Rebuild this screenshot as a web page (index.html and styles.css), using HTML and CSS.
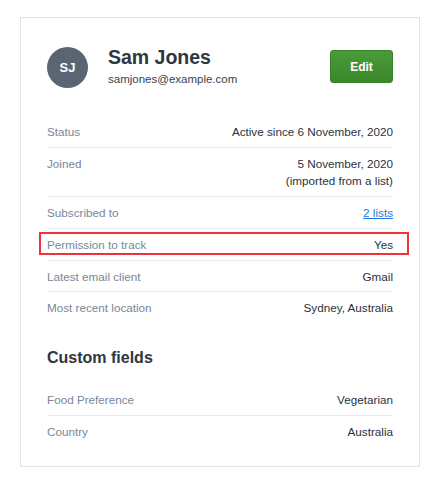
FILE: index.html
```html
<!DOCTYPE html>
<html lang="en">

<head>
    <title>Subscriber</title>
    <link rel="stylesheet" href="styles.css">
</head>

<body>
    <div class="card">
        <div class="profile">
            <div class="avatar">SJ</div>
            <div class="profile-info">
                <div class="profile-name">Sam Jones</div>
                <div class="profile-email">samjones@example.com</div>
            </div>
            <button class="edit-button">Edit</button>
        </div>

        <div class="details">
            <div class="row">
                <span class="label">Status</span>
                <span class="value">Active since 6 November, 2020</span>
            </div>
            <div class="row">
                <span class="label">Joined</span>
                <span class="value">5 November, 2020<br>(imported from a list)</span>
            </div>
            <div class="row">
                <span class="label">Subscribed to</span>
                <a class="value link" href="#">2 lists</a>
            </div>
            <div class="row highlighted">
                <span class="label">Permission to track</span>
                <span class="value">Yes</span>
            </div>
            <div class="row">
                <span class="label">Latest email client</span>
                <span class="value">Gmail</span>
            </div>
            <div class="row">
                <span class="label">Most recent location</span>
                <span class="value">Sydney, Australia</span>
            </div>
        </div>

        <h2 class="section-title">Custom fields</h2>

        <div class="details">
            <div class="row">
                <span class="label">Food Preference</span>
                <span class="value">Vegetarian</span>
            </div>
            <div class="row">
                <span class="label">Country</span>
                <span class="value">Australia</span>
            </div>
        </div>
    </div>
</body>

</html>
```

FILE: styles.css
```css
body {
    margin: 0;
    padding: 17px 21px 30px 20px;
    background: #ffffff;
    font-family: "Liberation Sans", Arial, sans-serif;
    -webkit-font-smoothing: antialiased;
}

.card {
    border: 1px solid #e1e5ea;
    padding: 29px 26px 19px 26px;
}

.profile {
    display: flex;
    align-items: center;
    gap: 20px;
    margin-bottom: 28px;
}

.avatar {
    display: flex;
    align-items: center;
    justify-content: center;
    width: 41px;
    height: 41px;
    border-radius: 50%;
    background-color: #5a6574;
    color: #ffffff;
    font-size: 13px;
    font-weight: 700;
    flex-shrink: 0;
}

.profile-info {
    flex: 1;
    display: flex;
    flex-direction: column;
    gap: 2px;
    margin-top: -4px;
}

.profile-name {
    font-size: 19.5px;
    font-weight: 700;
    color: #2e3641;
    line-height: 24px;
}

.profile-email {
    font-size: 11.5px;
    color: #3b424c;
    line-height: 16px;
}

.edit-button {
    width: 63px;
    height: 33px;
    margin-top: -2px;
    border: 1px solid #3a8229;
    border-radius: 3px;
    background: linear-gradient(#4a9b39, #3a872b);
    color: #ffffff;
    font-family: inherit;
    font-size: 12px;
    font-weight: 700;
    cursor: pointer;
}

.row {
    position: relative;
    display: flex;
    justify-content: space-between;
    align-items: flex-start;
    padding: 7px 0 6.3px 0;
    border-top: 1px solid #e9ebee;
    font-size: 11.7px;
    line-height: 17.5px;
}

.row:first-child {
    border-top: none;
}

.label {
    color: #7b8698;
}

.value {
    color: #2b323c;
    text-align: right;
}

.link {
    color: #1f7ae0;
    text-decoration: underline;
}

.highlighted::after {
    content: "";
    position: absolute;
    top: 3px;
    bottom: 5px;
    left: -8px;
    right: -16px;
    border: 2px solid #ef333c;
}

.section-title {
    margin: 24px 0 15px 0;
    font-size: 16px;
    line-height: 22px;
    font-weight: 700;
    color: #2e3641;
}
```
